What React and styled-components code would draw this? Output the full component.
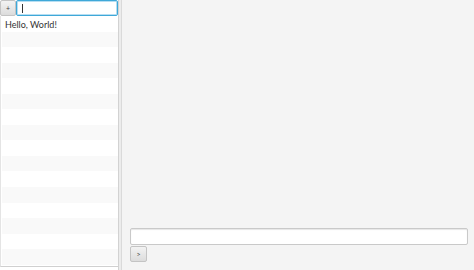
import styled, { createGlobalStyle } from "styled-components"

const Global = createGlobalStyle`
  html, body {
    margin: 0;
    padding: 0;
    background: #f4f4f4;
  }
  * { box-sizing: border-box; }
`

const Window = styled.div`
  display: flex;
  width: 474px;
  height: 270px;
  font-family: Lato, "Open Sans", sans-serif;
  font-size: 9px;
  color: #333;
  overflow: hidden;
`
const LeftPane = styled.div`
  width: 118px;
  display: flex;
  flex-direction: column;
  background: #fff;
  padding-bottom: 3px;
`
const TopBar = styled.div`
  display: flex;
  height: 16px;
`
const SmallButton = styled.button`
  width: ${(p) => p.$w || 16}px;
  height: ${(p) => p.$h || 16}px;
  padding: 0;
  margin: 0;
  border: 1px solid #c4c4c4;
  border-radius: 2px;
  background: linear-gradient(#f3f3f3, #dcdcdc);
  font-family: inherit;
  font-size: 7px;
  color: #444;
  display: flex;
  align-items: center;
  justify-content: center;
`
const Field = styled.div`
  flex: ${(p) => (p.$grow ? 1 : "none")};
  height: ${(p) => p.$h || 16}px;
  background: #fff;
  border: 1px solid ${(p) => (p.$focused ? "#3fa8d8" : "#c9c9c9")};
  box-shadow: ${(p) => (p.$focused ? "inset 0 0 0 1px #b6def2" : "inset 0 1px 1px #e6e6e6")};
  border-radius: 2px;
  position: relative;
`
const Caret = styled.span`
  position: absolute;
  left: 5px;
  top: 3px;
  width: 1px;
  height: 9px;
  background: #333;
`
const List = styled.div`
  flex: 1;
  border-left: 1px solid #e4e4e4;
  border-bottom: 1px solid #d0d0d0;
  padding-left: 1px;
  overflow: hidden;
`
const Row = styled.div`
  height: 15.55px;
  line-height: 17px;
  padding-left: 3px;
  background: ${(p) => (p.$odd ? "#f9f9f9" : "#fff")};
`
const Divider = styled.div`
  width: 4px;
  background: #ececec;
  border-left: 1px solid #d2d2d2;
  border-right: 1px solid #dadada;
`
const RightPane = styled.div`
  flex: 1;
  display: flex;
  flex-direction: column;
  justify-content: flex-end;
  gap: 1px;
  padding: 0 6px 8px 8px;
  background: #f4f4f4;
`

const rows = Array.from({ length: 16 }, (_, i) => (i === 0 ? "Hello, World!" : ""))

const App = () => (
  <>
    <Global />
    <Window>
      <LeftPane>
        <TopBar>
          <SmallButton $w={16}>+</SmallButton>
          <Field $grow $focused>
            <Caret />
          </Field>
        </TopBar>
        <List>
          {rows.map((text, i) => (
            <Row key={i} $odd={i % 2 === 1}>
              {text}
            </Row>
          ))}
        </List>
      </LeftPane>
      <Divider />
      <RightPane>
        <Field $h={17} />
        <SmallButton $w={17} $h={16}>&gt;</SmallButton>
      </RightPane>
    </Window>
  </>
)

export default App
